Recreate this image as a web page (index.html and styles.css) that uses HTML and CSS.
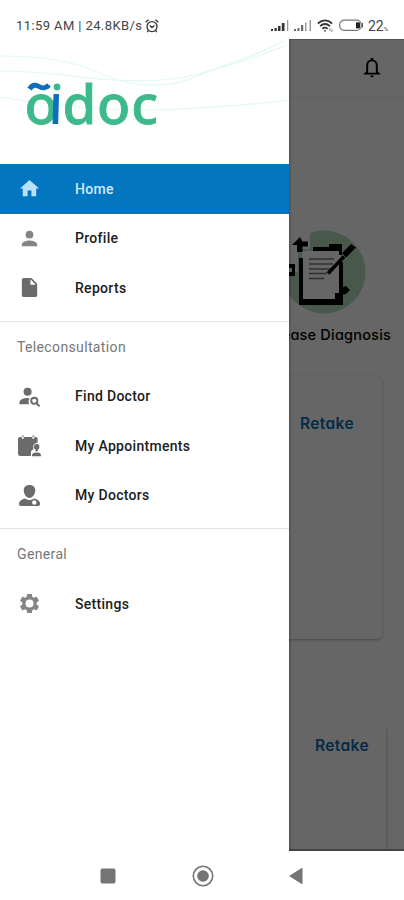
FILE: index.html
```
<!DOCTYPE html>
<html lang="en">
<head>
    <meta charset="UTF-8">
    <meta name="viewport" content="width=device-width, initial-scale=1.0">
    <title>adoc</title>
    <link rel="stylesheet" href="styles.css">
</head>
<body>
    <div class="phone">
        <header class="status-bar">
            <span class="status-time">11:59 AM | 24.8KB/s</span>
            <svg class="alarm" width="14" height="14" viewBox="0 0 14 14" fill="none" stroke="#333" stroke-width="1.3">
                <circle cx="7" cy="7.6" r="5"/>
                <path d="M.6 3.2 3.6.8M13.4 3.2 10.4.8M4.7 6.5 7 8.6l2.500-2M3.400 11.500l-1.200 1.600M10.600 11.500l1.200 1.600"/>
            </svg>
            <svg class="signals" width="42" height="13" viewBox="0 0 42 13">
                <path fill="#333" d="M0 10h2v2H0zM3.500 9h2.300v3H3.500zM7 7h2.500v5H7zM10.800 4h2.700v8h-2.700z"/>
                <path fill="#999" d="M16 1h1.300v11H16zM34 3.500h1.500V12H34zM38.500 1h1.500v11h-1.500z"/>
                <path fill="#666" d="M23 10h2v2h-2zM26.500 9h2v3h-2zM30 6h2.200v6H30z"/>
            </svg>
            <svg class="wifi" width="17" height="14" viewBox="0 0 17 14" fill="none" stroke="#333" stroke-width="1.7">
                <path d="M.8 4.500Q8 -1.800 15.200 4.500M3 7.200Q8 2.800 13 7.200M5.400 9.800Q8 7.600 10.600 9.800"/>
                <circle cx="8" cy="11.800" r=".9" fill="#333" stroke="none"/>
                <path stroke="#999" stroke-width="1.200" d="M13 9v3M15 10.500v2.500"/>
            </svg>
            <svg class="battery" width="25" height="13" viewBox="0 0 25 13">
                <rect x=".7" y="1.200" width="21.500" height="10.200" rx="4.500" fill="#fff" stroke="#777" stroke-width="1.200"/>
                <rect x="17" y="3.200" width="4" height="6.200" rx="1" fill="#222"/>
                <path d="M23.300 4v4.600" stroke="#555" stroke-width="1.300"/>
            </svg>
            <span class="percent">22<small>%</small></span>
        </header>

        <main class="content">
            <div class="page">
                <div class="app-bar">
                    <svg width="18" height="22" viewBox="0 0 18 22">
                        <path d="M9 3.400c-3 0-4.800 2.200-4.800 5.200v6.200L2.400 16.600h13.200l-1.800-1.800V8.600c0-3-1.800-5.200-4.800-5.200z" fill="none" stroke="#000" stroke-width="1.900"/>
                        <path d="M7.700 1h2.600v2.500H7.700zM7.200 18.600h3.600a1.800 1.800 0 0 1-3.600 0z"/>
                    </svg>
                </div>
                <div class="diagnosis">
                    <svg width="84" height="84" viewBox="0 0 84 84">
                        <circle cx="42" cy="42" r="41.500" fill="#b3dcb9"/>
                        <path d="M6 0h22v19H16v23H6z" fill="#fff"/>
                        <path d="M20 21h39v49H20z" fill="#fff"/>
                        <path d="M18 7l-8 8h5v7h5.500v-5.500H26v-5h-5.500z"/>
                        <path d="M17 28h4v41h40v6H17zM31 17h16v-3h13v11h-3v-4H31zM57 32h4v40h-4z"/>
                        <path d="M6 34h7v12H6v-4h4v-4H6z"/>
                        <path d="M27 29h25M27 34h24M27 39h25M27 43.500h18M27 48.500h15" stroke="#777" stroke-width="1.500"/>
                        <path d="M46 43.500l16-17" stroke="#000" stroke-width="3.500"/>
                        <path d="M60 23l9-9 5 3.500-10 10zM53 63h5v-5l6-2 4 4-4 4-5 1v6h-6z"/>
                    </svg>
                    <span>Disease Diagnosis</span>
                </div>
                <section class="card"><a href="#">Retake</a></section>
                <section class="card card-next"><a href="#">Retake</a></section>
            </div>
            <div class="scrim"></div>

            <aside class="drawer">
                <div class="brand">
                    <svg width="289" height="125" viewBox="0 0 289 125">
                        <g fill="none" stroke="#e3f8f2" stroke-width="1.200">
                            <path d="M0 17C45 17 72 22 100 34C135 51 175 49 202 35C230 24 255 18 283 2"/>
                            <path d="M0 32C40 32 75 38 112 41C165 44 190 38 212 31Q250 21 284 7"/>
                            <path d="M0 58C45 66 95 71 150 71Q225 69 289 61"/>
                        </g>
                        <g class="logo-text">
                            <text x="24.500" y="85">o</text>
                            <text x="62.500" y="85" textLength="95.500" lengthAdjust="spacing">doc</text>
                        </g>
                        <path d="M53.500 55h5.500l-.8 30h-5.700z" fill="#0d70bd"/>
                        <circle cx="57" cy="48" r="3.400" fill="#3db98b"/>
                        <path d="M29.500 50c3-4.500 6.500-4.500 9.500-2.500s7 2 10-1.500" fill="none" stroke="#0d70bd" stroke-width="5"/>
                    </svg>
                </div>
                <nav class="menu">
                    <a class="item active" href="#">
                        <svg viewBox="0 0 24 24"><path d="M10 20v-6h4v6h5v-8h3L12 3 2 12h3v8z"/></svg>
                        <span>Home</span>
                    </a>
                    <a class="item light" href="#">
                        <svg viewBox="0 0 24 24"><path d="M12 12a4 4 0 1 0 0-8 4 4 0 0 0 0 8zm0 2c-2.700 0-8 1.300-8 4v2h16v-2c0-2.700-5.300-4-8-4z"/></svg>
                        <span>Profile</span>
                    </a>
                    <a class="item" href="#">
                        <svg viewBox="0 0 24 24"><path d="M6 2a2 2 0 0 0-2 2v16c0 1.100.9 2 2 2h12a2 2 0 0 0 2-2V8l-6-6zm7 7V3.500L18.500 9z"/></svg>
                        <span>Reports</span>
                    </a>
                </nav>
                <nav class="menu group">
                    <h2>Teleconsultation</h2>
                    <a class="item" href="#">
                        <svg viewBox="0 0 24 24">
                            <circle cx="10" cy="7" r="4.200"/>
                            <path d="M10.500 13.500C5 13.500 1.500 15.500 1.500 18v2h10c-.8-2-.6-4.500.7-6z"/>
                            <circle cx="17" cy="16.500" r="3.200" fill="none" stroke="currentColor" stroke-width="2"/>
                            <path d="M19 18.800l3.500 3.500" stroke="currentColor" stroke-width="2.200"/>
                        </svg>
                        <span>Find Doctor</span>
                    </a>
                    <a class="item" href="#">
                        <svg viewBox="0 0 24 24">
                            <path d="M2 3h2V1.500h2V3h9V1.500h2V3h1.500a2 2 0 0 1 2 2v18h-18A2.500 2.500 0 0 1 0 20.500V5a2 2 0 0 1 2-2z"/>
                            <path fill="#fff" d="M13.500 24v-6l2.500-2v-4.500L19 9h5v15zM4 2.500h2V5H4zM15 2.500h2V5h-2z"/>
                            <path d="M19.500 10.500a2.800 2.800 0 0 1 2.800 3c0 1.500-.8 2.300-1.500 2.800V18h-2.600v-1.700c-.7-.5-1.500-1.300-1.500-2.800a2.800 2.800 0 0 1 2.800-3zM14.500 23.200c0-3 1.500-4 5-4s4.500 1 4.500 4z"/>
                        </svg>
                        <span>My Appointments</span>
                    </a>
                    <a class="item" href="#">
                        <svg viewBox="0 0 24 24">
                            <path d="M12 1c3.800 0 6 2.200 6 5.800S15.500 14.500 12 14.500 6 10.300 6 6.800 8.200 1 12 1zM7.500 15q4.500 3.500 9 0c4 .8 6.500 2.700 6.500 5.500 0 1.500-1 2.500-2.500 2.500h-17C2 23 1 22 1 20.500 1 17.700 3.500 15.800 7.500 15z"/>
                            <circle cx="17" cy="19.300" r="2.300" fill="#fff"/>
                        </svg>
                        <span>My Doctors</span>
                    </a>
                </nav>
                <nav class="menu group">
                    <h2>General</h2>
                    <a class="item light" href="#">
                        <svg viewBox="0 0 24 24"><path d="M19.430 12.980c.04-.32.07-.64.07-.98s-.03-.66-.07-.98l2.110-1.650a.5.5 0 0 0 .12-.64l-2-3.460a.5.500 0 0 0-.61-.22l-2.490 1a7.300 7.300 0 0 0-1.690-.98l-.38-2.650A.49.49 0 0 0 14 2h-4a.49.49 0 0 0-.49.420l-.38 2.650c-.61.250-1.170.590-1.690.98l-2.490-1a.5.5 0 0 0-.61.220l-2 3.460a.5.5 0 0 0 .12.640l2.110 1.650a8 8 0 0 0 0 1.960l-2.110 1.650a.5.5 0 0 0-.12.640l2 3.460c.12.220.39.300.61.220l2.490-1c.52.400 1.080.730 1.690.980l.38 2.650c.03.240.24.420.49.420h4c.25 0 .46-.18.49-.42l.38-2.650c.61-.25 1.170-.59 1.690-.98l2.490 1c.23.090.49 0 .61-.22l2-3.460a.5.5 0 0 0-.12-.64zM12 16.200a4.200 4.200 0 1 1 0-8.400 4.200 4.200 0 0 1 0 8.400z"/></svg>
                        <span>Settings</span>
                    </a>
                </nav>
            </aside>
        </main>

        <footer class="nav-bar">
            <svg width="16" height="16" viewBox="0 0 16 16"><rect x=".5" y=".5" width="15" height="15" rx="2"/></svg>
            <svg width="22" height="22" viewBox="0 0 22 22">
                <circle cx="11" cy="11" r="9.700" fill="none" stroke="#757575" stroke-width="1.600"/>
                <circle cx="11" cy="11" r="5.800"/>
            </svg>
            <svg width="14" height="18" viewBox="0 0 14 18"><path d="M0 9 13.500.5v17z"/></svg>
        </footer>
    </div>
</body>
</html>
```
FILE: styles.css
```
* {
    box-sizing: border-box;
}
body {
    margin: 0;
    font-family: Roboto, "Liberation Sans", sans-serif;
    background: #fff;
}
a {
    color: inherit;
    text-decoration: none;
}
svg {
    display: block;
    flex: none;
}
.phone {
    display: flex;
    flex-direction: column;
    width: 404px;
    height: 900px;
    overflow: hidden;
}

/* system bars */
.status-bar {
    display: flex;
    align-items: center;
    height: 39px;
    padding: 12px 14px 0 16px;
    font-size: 13px;
    color: #444;
}
.status-time {
    width: 127px;
    letter-spacing: 0.4px;
    white-space: nowrap;
}
.alarm {
    margin-left: 2px;
}
.signals {
    margin-left: 112px;
}
.wifi {
    margin-left: 4px;
}
.battery {
    margin-left: 5px;
}
.percent {
    margin-left: 4px;
    font-size: 14px;
}
.percent small {
    font-size: 6px;
}
.nav-bar {
    display: flex;
    align-items: center;
    height: 49px;
    padding-left: 100px;
    gap: 75.5px;
    fill: #757575;
}

/* page under the drawer */
.content {
    position: relative;
    height: 812px;
    overflow: hidden;
}
.page {
    height: 100%;
    font-family: Inter, "Open Sans", sans-serif;
    font-feature-settings: "cv11";
    background: #fff;
}
.app-bar {
    display: flex;
    justify-content: flex-end;
    height: 59px;
    padding: 18px 23px 0 0;
    border-bottom: 1px solid #eee;
}
.diagnosis {
    display: flex;
    flex-direction: column;
    align-items: center;
    width: 135px;
    margin: 132px 13px 0 auto;
    font-size: 14.5px;
    font-weight: 450;
    letter-spacing: 0.2px;
    white-space: nowrap;
}
.diagnosis span {
    align-self: flex-end;
    margin-top: 12px;
    line-height: 18px;
}
.card {
    width: 362px;
    height: 263px;
    margin: 32px 0 0 20px;
    padding: 38px 28px 0;
    border-radius: 5px;
    box-shadow: 0 1px 3px rgba(0, 0, 0, 0.3);
    color: #0a6cb4;
    font-size: 15.5px;
    font-weight: 600;
    line-height: 20px;
    letter-spacing: 0.4px;
    text-align: right;
}
.card-next {
    width: 366px;
    margin-top: 86px;
    padding: 11px 17px 0;
    box-shadow: 1px 1px 2px rgba(0, 0, 0, 0.2);
}
.scrim {
    position: absolute;
    inset: 0;
    background: rgba(0, 0, 0, 0.6);
    border-top: 1px solid #555;
    border-bottom: 2px solid #444;
}

/* drawer */
.drawer {
    position: absolute;
    top: 0;
    left: 0;
    width: 289px;
    height: 100%;
    background: #fff;
    box-shadow: 0 0 3px rgba(0, 0, 0, 0.5);
}
.brand {
    height: 125px;
}
.logo-text {
    font-family: "Noto Sans", sans-serif;
    font-size: 54.5px;
    font-weight: 500;
    fill: #3db98b;
    stroke: #3db98b;
    stroke-width: 0.8px;
}
.item {
    display: flex;
    align-items: center;
    height: 49.5px;
    padding-left: 18px;
    color: #1c1c1c;
    font-size: 14px;
    font-weight: 500;
    letter-spacing: 0.3px;
}
.item svg {
    width: 23px;
    height: 23px;
    margin-right: 34px;
    color: #6b6b6b;
    fill: currentColor;
}
.item.light svg {
    color: #858585;
}
.item.active {
    background: #0475bf;
    color: #cfeaff;
}
.item.active svg {
    color: #b9e2ff;
}
.menu {
    padding-bottom: 8px;
}
.group {
    border-top: 1px solid #e2e2e2;
}
.group h2 {
    margin: 0;
    padding: 16px 17px 16px;
    font-size: 14px;
    font-weight: 400;
    line-height: 18px;
    letter-spacing: 0.36px;
    color: #777;
}
```
